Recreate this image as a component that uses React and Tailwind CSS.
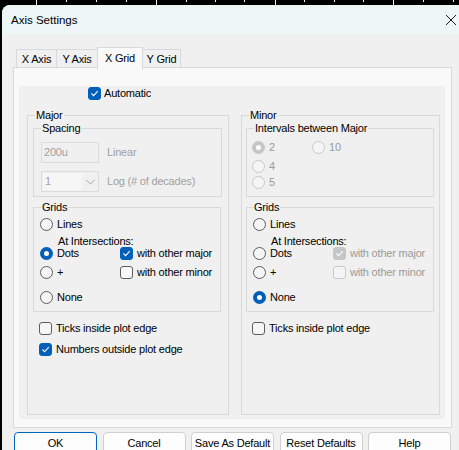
import React from 'react';

const Check = ({ checked, disabled }) => {
    const box = checked
        ? disabled ? 'bg-[#c6c6c6] border-[#c6c6c6]' : 'bg-[#005fb8] border-[#005fb8]'
        : disabled ? 'bg-[#f5f5f5] border-[#c8c8c8]' : 'bg-[#f7f7f7] border-[#5d5d5d]';
    return (
        <div className={`w-[13px] h-[13px] shrink-0 rounded-[3px] border flex items-center justify-center ${box}`}>
            {checked && (
                <svg width="11" height="11" viewBox="0 0 11 11">
                    <path d="M2.5 5.5 L4.6 7.6 L8.8 3.2" fill="none" stroke="white" strokeWidth="1.1" />
                </svg>
            )}
        </div>
    );
};

const Radio = ({ checked, disabled }) => {
    if (checked) {
        return (
            <div className={`w-[13px] h-[13px] shrink-0 rounded-full flex items-center justify-center ${disabled ? 'bg-[#c6c6c6]' : 'bg-[#005fb8]'}`}>
                <div className="w-[5px] h-[5px] rounded-full bg-white" />
            </div>
        );
    }
    return (
        <div className={`w-[13px] h-[13px] shrink-0 rounded-full border ${disabled ? 'bg-[#f5f5f5] border-[#c8c8c8]' : 'bg-[#f5f5f5] border-[#5d5d5d]'}`} />
    );
};

const Option = ({ radio, checked, disabled, label, gap = 'gap-[4px]' }) => (
    <div className={`flex items-center h-[13px] ${gap}`}>
        {radio ? <Radio checked={checked} disabled={disabled} /> : <Check checked={checked} disabled={disabled} />}
        <span className={`leading-[13px] whitespace-nowrap ${disabled ? 'text-[#9a9a9a]' : 'text-black'}`}>{label}</span>
    </div>
);

const Group = ({ title, className, legend = 'ml-[2px]', children }) => (
    <fieldset className={`border border-[#d9d9d9] ${className}`}>
        <legend className={`px-[1px] leading-[14px] ${legend}`}>{title}</legend>
        {children}
    </fieldset>
);

const GridsBox = ({ dim, selected, pl, legend }) => (
    <Group title="Grids" className={`w-[188px] h-[112px] mt-[3px] ${pl}`} legend={legend}>
        <div className="mt-[4px]">
            <Option radio checked={selected === 'lines'} label="Lines" />
        </div>
        <div className="pl-[18px] mt-[4px] leading-[12px] h-[12px]">At Intersections:</div>
        <div className="flex items-center">
            <div className="w-[80px]">
                <Option radio checked={selected === 'dots'} label="Dots" />
            </div>
            <Option checked disabled={dim} label="with other major" />
        </div>
        <div className="flex items-center mt-[6px]">
            <div className="w-[80px]">
                <Option radio checked={selected === 'plus'} label="+" />
            </div>
            <Option disabled={dim} label="with other minor" />
        </div>
        <div className="mt-[12px]">
            <Option radio checked={selected === 'none'} label="None" />
        </div>
    </Group>
);

const tabs = [
    { name: 'X Axis', w: 'w-[41px] h-[19px] border-l' },
    { name: 'Y Axis', w: 'w-[41px] h-[19px]' },
    { name: 'X Grid', w: 'w-[46px] h-[22px] -mb-[1px] -ml-[1px] border-l bg-[#f9f9f9] relative z-10', active: true },
    { name: 'Y Grid', w: 'w-[38px] h-[19px]' },
];

const buttons = ['OK', 'Cancel', 'Save As Default', 'Reset Defaults', 'Help'];

const ticks = [
    [36, 5], [66, 2], [96, 2], [126, 2], [156, 5], [186, 2], [215, 2], [244, 2],
    [275, 5], [304, 2], [334, 2], [363, 2], [393, 5], [423, 2], [453, 2],
];

export default function App() {
    return (
        <div className="w-[459px] h-[450px] overflow-hidden bg-black font-['Liberation_Sans',Arial,sans-serif] text-[11px] tracking-[-0.2px] text-black">
            <svg width="459" height="5" className="block">
                {ticks.map(([x, h]) => (
                    <line key={x} x1={x + 0.5} y1="0" x2={x + 0.5} y2={h} stroke="white" strokeWidth="1" />
                ))}
            </svg>
            <div className="ml-[2px] h-[445px] rounded-tl-[8px] overflow-hidden bg-[#f0f0f0]">
                {/* title bar */}
                <div className="h-[30px] bg-[#edf5f6] flex items-center justify-between pl-[9px] pr-[2px] pt-[2px]">
                    <span className="text-[11.5px] tracking-normal">Axis Settings</span>
                    <svg width="12" height="12" viewBox="0 0 12 12" className="mb-[2px]">
                        <path d="M1 1 L11 11 M11 1 L1 11" stroke="#1a1a1a" strokeWidth="1" fill="none" />
                    </svg>
                </div>

                {/* tabs */}
                <div className="flex items-end h-[21px] mt-[12px] pl-[14px]">
                    {tabs.map((t) => (
                        <div key={t.name} className={`flex items-center justify-center border-t border-r border-[#d9d9d9] ${t.w}`}>
                            {t.name}
                        </div>
                    ))}
                </div>

                {/* page */}
                <div className="ml-[11px] -mt-[1px] w-[439px] h-[361px] border border-[#d9d9d9] bg-[#f9f9f9] pt-[18px] pl-[5px]">
                    <div className="w-[426px] h-[333px] bg-[#f0f0f0] pt-[1px]">
                        <div className="pl-[69px]">
                            <Option checked label="Automatic" gap="gap-[3px]" />
                        </div>

                        <div className="flex gap-[12px] mt-[8px] pl-[8px]">
                            {/* Major */}
                            <Group title="Major" className="w-[202px] h-[307px] pl-[5px]">
                                <Group title="Spacing" className="w-[189px] h-[76px] -mt-[1px] pl-[7px]" legend="ml-0">
                                    <div className="flex items-center gap-[8px] mt-[7px]">
                                        <div className="w-[58px] h-[21px] border border-[#dcdcdc] bg-[#f0f0f0] flex items-center pl-[2px] text-[#a0a0a0]">200u</div>
                                        <span className="text-[#a0a0a0]">Linear</span>
                                    </div>
                                    <div className="flex items-center gap-[8px] mt-[8px]">
                                        <div className="w-[58px] h-[21px] border border-[#dcdcdc] bg-[#f0f0f0] flex items-stretch">
                                            <div className="w-[39px] m-[1px] bg-[#f6f6f6] flex items-center pl-[2px] text-[#a0a0a0]">1</div>
                                            <div className="flex-1 flex items-center justify-center">
                                                <svg width="9" height="6" viewBox="0 0 9 6">
                                                    <path d="M0.5 1 L4.5 5 L8.5 1" stroke="#a8a8a8" strokeWidth="1" fill="none" />
                                                </svg>
                                            </div>
                                        </div>
                                        <span className="text-[#a0a0a0]">Log (# of decades)</span>
                                    </div>
                                </Group>

                                <GridsBox dim={false} selected="dots" pl="pl-[6px]" legend="ml-[1px]" />

                                <div className="pl-[6px] mt-[10px]">
                                    <Option label="Ticks inside plot edge" />
                                </div>
                                <div className="pl-[6px] mt-[8px]">
                                    <Option checked label="Numbers outside plot edge" />
                                </div>
                            </Group>

                            {/* Minor */}
                            <Group title="Minor" className="w-[199px] h-[307px] pl-[4px]" legend="ml-[3px]">
                                <Group title="Intervals between Major" className="w-[188px] h-[76px] -mt-[1px] pl-[5px]" legend="ml-[2px]">
                                    <div className="flex mt-[6px]">
                                        <div className="w-[60px]">
                                            <Option radio checked disabled label="2" />
                                        </div>
                                        <Option radio disabled label="10" />
                                    </div>
                                    <div className="mt-[6px]">
                                        <Option radio disabled label="4" />
                                    </div>
                                    <div className="mt-[3px]">
                                        <Option radio disabled label="5" />
                                    </div>
                                </Group>

                                <GridsBox dim selected="none" pl="pl-[6px]" legend="ml-0" />

                                <div className="pl-[6px] mt-[10px]">
                                    <Option label="Ticks inside plot edge" />
                                </div>
                            </Group>
                        </div>
                    </div>
                </div>

                {/* buttons */}
                <div className="flex justify-between w-[437px] ml-[12px] mt-[4px]">
                    {buttons.map((b) => (
                        <div
                            key={b}
                            className={`w-[83px] h-[23px] rounded-[4px] bg-[#fdfdfd] flex items-center justify-center border ${b === 'OK' ? 'border-[#0067c0]' : 'border-[#d0d0d0]'}`}
                        >
                            {b}
                        </div>
                    ))}
                </div>
            </div>
        </div>
    );
}
